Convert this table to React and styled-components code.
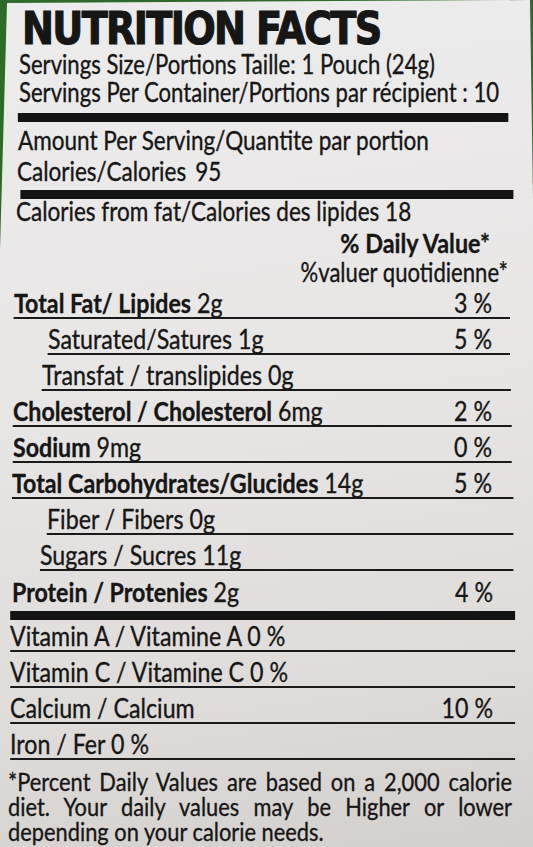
import React from "react";
import styled, { createGlobalStyle } from "styled-components";

// the photo is squeezed horizontally, so the label is laid out wide and scaled in x
const SCALE_X = 0.85;
const x = (v) => `${(v / SCALE_X).toFixed(2)}px`;

const GlobalStyle = createGlobalStyle`
  html, body {
    margin: 0;
    padding: 0;
  }
  body {
    background: #2f6a2b;
    overflow: hidden;
    font-family: Lato, "Open Sans", sans-serif;
    color: #161616;
  }
`;

const Page = styled.div`
  width: 533px;
  height: 847px;
  background: #2f6a2b;
  overflow: hidden;
`;

const Paper = styled.div`
  width: 533px;
  height: 847px;
  background: linear-gradient(172deg, #edecec 0%, #e8e6e5 45%, #dedbd9 80%, #d3cfcc 100%);
  clip-path: polygon(7px 3px, 530px 0, 533px 200px, 533px 100%, 0 100%, 0 250px);
  overflow: hidden;
`;

const Sheet = styled.div`
  width: ${x(533)};
  height: 847px;
  padding-top: 7px;
  box-sizing: border-box;
  transform: scaleX(${SCALE_X});
  transform-origin: left top;
  -webkit-text-stroke: 0.35px #161616;
`;

const Title = styled.h1`
  margin: 0 0 0 ${x(22)};
  font-family: "DejaVu Sans", "Liberation Sans", sans-serif;
  font-weight: 700;
  font-size: 45px;
  line-height: 43px;
  letter-spacing: -2px;
  -webkit-text-stroke: 1.2px #161616;
  white-space: nowrap;
`;

const ServingLine = styled.div`
  margin-left: ${x(19)};
  font-size: 26px;
  line-height: 28px;
  white-space: nowrap;
`;

const ThickBar = styled.div`
  height: 9px;
  margin: ${(p) => p.$top}px ${(p) => x(533 - p.$right)} 0 ${(p) => x(p.$left)};
  background: #141414;
`;

const CalorieLine = styled.div`
  margin-left: ${(p) => x(p.$left)};
  font-size: 26.5px;
  line-height: ${(p) => p.$lh}px;
  white-space: nowrap;
  word-spacing: ${(p) => (p.$wide ? "4px" : "0")};
`;

const DailyHead = styled.div`
  margin-right: ${(p) => x(533 - p.$right)};
  text-align: right;
  font-size: ${(p) => (p.$bold ? 27.5 : 26)}px;
  font-weight: ${(p) => (p.$bold ? 700 : 400)};
  line-height: ${(p) => p.$lh}px;
  white-space: nowrap;
`;

const Row = styled.div`
  display: flex;
  justify-content: space-between;
  align-items: baseline;
  margin-left: ${(p) => x(p.$indent)};
  margin-right: ${(p) => x(533 - p.$right)};
  padding-top: ${(p) => p.$pad}px;
  height: ${(p) => p.$lh}px;
  line-height: ${(p) => p.$lh}px;
  font-size: 27.3px;
  white-space: nowrap;
  border-bottom: ${(p) => (p.$open ? "none" : "2px solid #1a1a1a")};
`;

const Name = styled.span`
  font-weight: 700;
`;

const Pct = styled.span`
  padding-right: ${(p) => x(p.$gap)};
`;

const Footnote = styled.div`
  margin: 9px ${x(21)} 0 ${x(8)};
  font-size: 25.7px;
  line-height: 25px;
`;

const FootLine = styled.div`
  text-align: left;
  text-align-last: ${(p) => (p.$justify ? "justify" : "left")};
  white-space: nowrap;
`;

const nutrients = [
  { bold: "Total Fat/ Lipides", value: "2g", pct: "3 %", indent: 14, right: 510 },
  { name: "Saturated/Satures", value: "1g", pct: "5 %", indent: 48, right: 510 },
  { name: "Transfat / translipides", value: "0g", indent: 42, right: 511 },
  { bold: "Cholesterol / Cholesterol", value: "6mg", pct: "2 %", indent: 13, right: 512 },
  { bold: "Sodium", value: "9mg", pct: "0 %", indent: 13, right: 512 },
  { bold: "Total Carbohydrates/Glucides", value: "14g", pct: "5 %", indent: 12, right: 513 },
  { name: "Fiber / Fibers", value: "0g", indent: 47, right: 513 },
  { name: "Sugars / Sucres", value: "11g", indent: 40, right: 513 },
];

const vitamins = [
  { label: "Vitamin A / Vitamine A 0 %", pad: 2 },
  { label: "Vitamin C / Vitamine C 0 %", pad: 6 },
  { label: "Calcium / Calcium", pct: "10 %", pad: 6 },
  { label: "Iron / Fer 0 %", pad: 6 },
];

const App = () => {
  return (
    <Page>
      <GlobalStyle />
      <Paper>
        <Sheet>
          <Title>NUTRITION FACTS</Title>
          <ServingLine>Servings Size/Portions Taille: 1 Pouch (24g)</ServingLine>
          <ServingLine>Servings Per Container/Portions par récipient : 10</ServingLine>
          <ThickBar $top={7} $left={18} $right={508} />
          <CalorieLine $left={18} $lh={36}>
            Amount Per Serving/Quantite par portion
          </CalorieLine>
          <CalorieLine $left={17} $lh={27} $wide>
            Calories/Calories 95
          </CalorieLine>
          <ThickBar $top={5} $left={20} $right={513} />
          <CalorieLine $left={16} $lh={25}>
            Calories from fat/Calories des lipides 18
          </CalorieLine>
          <DailyHead $bold $right={490} $lh={38}>
            % Daily Value*
          </DailyHead>
          <DailyHead $right={508} $lh={21}>
            %valuer quotidienne*
          </DailyHead>

          {nutrients.map((n) => (
            <Row key={n.bold || n.name} $indent={n.indent} $right={n.right} $pad={6} $lh={28}>
              <span>
                {n.bold ? <Name>{n.bold}</Name> : n.name} {n.value}
              </span>
              {n.pct && <Pct $gap={n.right - 492}>{n.pct}</Pct>}
            </Row>
          ))}
          <Row $indent={12} $right={515} $pad={5} $lh={32} $open>
            <span>
              <Name>Protein / Protenies</Name> 2g
            </span>
            <Pct $gap={22}>4 %</Pct>
          </Row>
          <ThickBar $top={3} $left={10} $right={515} />

          {vitamins.map((v) => (
            <Row key={v.label} $indent={10} $right={515} $pad={v.pad} $lh={28}>
              <span>{v.label}</span>
              {v.pct && <Pct $gap={22}>{v.pct}</Pct>}
            </Row>
          ))}

          <Footnote>
            <FootLine $justify>*Percent Daily Values are based on a 2,000 calorie</FootLine>
            <FootLine $justify>diet. Your daily values may be Higher or lower</FootLine>
            <FootLine>depending on your calorie needs.</FootLine>
          </Footnote>
        </Sheet>
      </Paper>
    </Page>
  );
};

export default App;
